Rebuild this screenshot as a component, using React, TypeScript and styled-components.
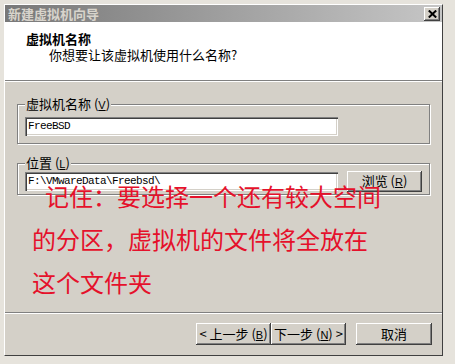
import React from 'react';
import styled, { createGlobalStyle } from 'styled-components';

const GlobalStyle = createGlobalStyle`
  html, body {
    margin: 0;
    padding: 0;
  }
  body {
    width: 455px;
    height: 364px;
    overflow: hidden;
    background: #e6e3dc;
    font-family: "Noto Sans CJK SC", "Liberation Sans", sans-serif;
  }
`;

const Screen = styled.div`
  width: 455px;
  height: 364px;
  padding: 4px 0 0 4px;
  box-sizing: border-box;
`;

const Window = styled.div`
  width: 439px;
  height: 352px;
  box-sizing: border-box;
  display: flex;
  flex-direction: column;
  background: #d4d0c8;
  border: 1px solid;
  border-color: #ffffff #404040 #404040 #ffffff;
`;

const TitleBar = styled.div`
  height: 17px;
  flex: none;
  display: flex;
  align-items: center;
  justify-content: space-between;
  padding: 0 2px 0 3px;
  background: linear-gradient(to right, #787878, #c6c6c6);
`;

const TitleText = styled.span`
  color: #d8d4cc;
  font-size: 13px;
  font-weight: 700;
  line-height: 17px;
`;

const CloseButton = styled.button`
  width: 16px;
  height: 14px;
  padding: 0;
  margin: 0;
  border: none;
  background: #d4d0c8;
  display: flex;
  align-items: center;
  justify-content: center;
  box-shadow: inset -1px -1px #404040, inset 1px 1px #ffffff, inset -2px -2px #808080;
`;

const Header = styled.div`
  height: 58px;
  flex: none;
  box-sizing: border-box;
  background: #ffffff;
  padding: 9px 0 0 21px;
`;

const HeaderTitle = styled.div`
  font-size: 13px;
  font-weight: 700;
  line-height: 15px;
  color: #000;
`;

const HeaderSub = styled.div`
  font-size: 13px;
  line-height: 16px;
  margin: 1px 0 0 23px;
  color: #000;
`;

const Divider = styled.div`
  height: 0;
  flex: none;
  border-top: 1px solid #808080;
  border-bottom: 1px solid #ffffff;
`;

const Body = styled.div`
  position: relative;
  height: 230px;
  flex: none;
  box-sizing: border-box;
  padding: 15px 0 0 12px;
  display: flex;
  flex-direction: column;
  gap: 12px;
`;

const Group = styled.fieldset<{ $bottom: number }>`
  width: 413px;
  box-sizing: border-box;
  margin: 0;
  padding: 0 7px ${p => p.$bottom}px 7px;
  border: 1px solid #808080;
  box-shadow: inset 1px 1px #ffffff, 1px 1px #ffffff;
`;

const Legend = styled.legend`
  padding: 0 1px;
  font-size: 13px;
  line-height: 14px;
  color: #000;
  background: #d4d0c8;
`;

const Key = styled.u`
  font-family: "Liberation Sans", sans-serif;
  font-size: 11px;
`;

const Row = styled.div<{ $top: number }>`
  display: flex;
  align-items: center;
  margin-top: ${p => p.$top}px;
`;

const TextBox = styled.div`
  width: 313px;
  height: 19px;
  box-sizing: border-box;
  padding: 3px 0 0 3px;
  background: #ffffff;
  font-family: "Liberation Mono", monospace;
  font-size: 11px;
  letter-spacing: -0.6px;
  line-height: 13px;
  color: #000;
  box-shadow: inset 1px 1px #808080, inset 2px 2px #404040, inset -1px -1px #ffffff, inset -2px -2px #d4d0c8;
`;

const Button = styled.button<{ $width: number }>`
  width: ${p => p.$width}px;
  height: 22px;
  margin: 0;
  padding: 0;
  border: none;
  background: #d4d0c8;
  font-family: "Noto Sans CJK SC", "Liberation Sans", sans-serif;
  font-size: 13px;
  line-height: 16px;
  color: #000;
  white-space: pre;
  box-shadow: inset -1px -1px #404040, inset 1px 1px #ffffff, inset -2px -2px #808080;
`;

const BrowseButton = styled(Button)`
  height: 21px;
  margin-left: 9px;
`;

const Note = styled.div`
  position: absolute;
  left: 27px;
  top: 101px;
  width: 400px;
  display: flex;
  flex-direction: column;
  gap: 17px;
`;

const NoteLine = styled.div<{ $indent?: number }>`
  font-family: "Noto Sans CJK SC", sans-serif;
  font-size: 24px;
  line-height: 26px;
  padding-left: ${p => p.$indent || 0}px;
  color: #e5112b;
`;

const Footer = styled.div`
  flex: 1;
  display: flex;
  justify-content: flex-end;
  align-items: flex-start;
  padding: 9px 10px 0 0;
`;

const Spacer = styled.div`
  width: 10px;
`;

const App: React.FC = () => {
  return (
    <Screen>
      <GlobalStyle />
      <Window>
        <TitleBar>
          <TitleText>新建虚拟机向导</TitleText>
          <CloseButton>
            <svg width="9" height="8" viewBox="0 0 9 8">
              <path d="M0.8 0.5 L8.2 7.5 M8.2 0.5 L0.8 7.5" stroke="#000" strokeWidth="2" />
            </svg>
          </CloseButton>
        </TitleBar>
        <Header>
          <HeaderTitle>虚拟机名称</HeaderTitle>
          <HeaderSub>你想要让该虚拟机使用什么名称?</HeaderSub>
        </Header>
        <Divider />
        <Body>
          <Group $bottom={7}>
            <Legend>虚拟机名称 (<Key>V</Key>)</Legend>
            <Row $top={5}>
              <TextBox>FreeBSD</TextBox>
            </Row>
          </Group>
          <Group $bottom={2}>
            <Legend>位置 (<Key>L</Key>)</Legend>
            <Row $top={0}>
              <TextBox>F:\VMwareData\Freebsd\</TextBox>
              <BrowseButton $width={75}>浏览 (<Key>R</Key>)</BrowseButton>
            </Row>
          </Group>
          <Note>
            <NoteLine $indent={13}>记住：要选择一个还有较大空间</NoteLine>
            <NoteLine>的分区，虚拟机的文件将全放在</NoteLine>
            <NoteLine>这个文件夹</NoteLine>
          </Note>
        </Body>
        <Divider />
        <Footer>
          <Button $width={75}>{'< 上一步 ('}<Key>B</Key>)</Button>
          <Button $width={75}>下一步 (<Key>N</Key>{') >'}</Button>
          <Spacer />
          <Button $width={76}>取消</Button>
        </Footer>
      </Window>
    </Screen>
  );
};

export default App;
